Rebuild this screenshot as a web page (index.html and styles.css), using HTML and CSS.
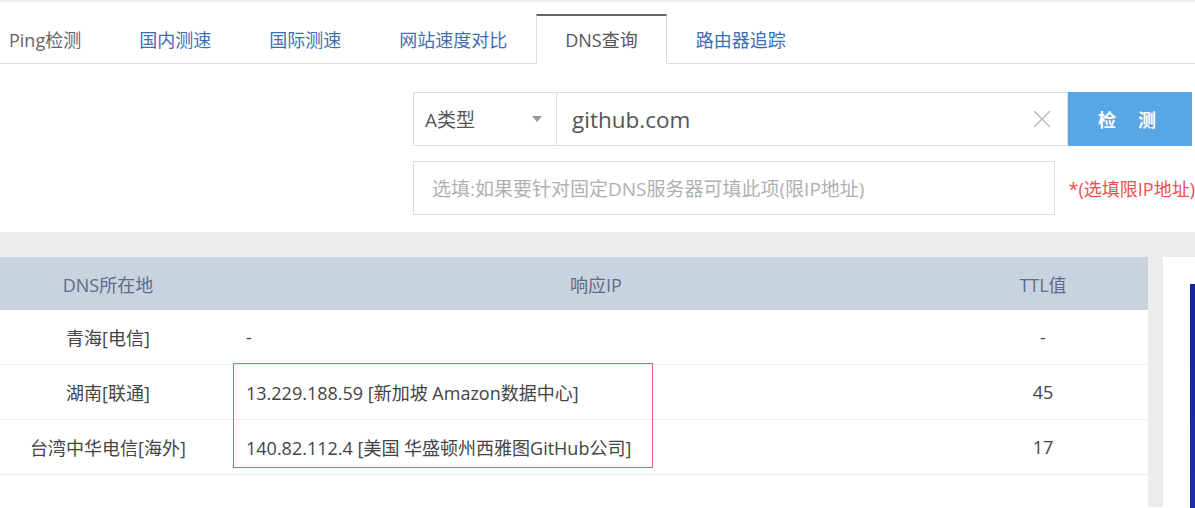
FILE: index.html
```html
<!DOCTYPE html>
<html lang="zh-CN">
<head>
<meta charset="utf-8">
<title>DNS查询</title>
<link rel="stylesheet" href="styles.css">
</head>
<body>
<div class="page">
  <nav class="tabs">
    <a class="tab tab-first">Ping检测</a>
    <a class="tab">国内测速</a>
    <a class="tab">国际测速</a>
    <a class="tab">网站速度对比</a>
    <a class="tab tab-active">DNS查询</a>
    <a class="tab">路由器追踪</a>
  </nav>
  <section class="form">
    <div class="form-row">
      <div class="select">
        <span>A类型</span>
        <span class="caret"></span>
      </div>
      <div class="domain">
        <span class="domain-text">github.com</span>
        <svg class="clear" width="18" height="18" viewBox="0 0 18 18"><path d="M1 1L17 17M17 1L1 17" stroke="#b5b5b5" stroke-width="1.3" fill="none"/></svg>
      </div>
      <button class="btn">检测</button>
    </div>
    <div class="form-row form-row-2">
      <div class="server">选填:如果要针对固定DNS服务器可填此项(限IP地址)</div>
      <span class="hint">*(选填限IP地址)</span>
    </div>
  </section>
  <section class="main">
    <div class="card">
      <div class="thead">
        <div class="c1">DNS所在地</div>
        <div class="c2 center">响应IP</div>
        <div class="c3">TTL值</div>
      </div>
      <div class="tbody">
        <div class="tr">
          <div class="c1">青海[电信]</div>
          <div class="c2">-</div>
          <div class="c3">-</div>
        </div>
        <div class="tr">
          <div class="c1">湖南[联通]</div>
          <div class="c2">13.229.188.59 [新加坡 Amazon数据中心]</div>
          <div class="c3">45</div>
        </div>
        <div class="tr">
          <div class="c1">台湾中华电信[海外]</div>
          <div class="c2">140.82.112.4 [美国 华盛顿州西雅图GitHub公司]</div>
          <div class="c3">17</div>
        </div>
        <div class="mark"></div>
      </div>
    </div>
    <aside class="side">
      <div class="side-bar"></div>
    </aside>
  </section>
</div>
</body>
</html>
```

FILE: styles.css
```css
* { box-sizing: border-box; }
html, body { margin: 0; padding: 0; }
body {
  width: 1195px;
  height: 508px;
  overflow: hidden;
  background: #fff;
  font-family: "Open Sans", "Noto Sans CJK SC", sans-serif;
  color: #444;
}
.page { width: 1195px; border-top: 2px solid #eeeeee; }

.tabs {
  display: flex;
  padding-top: 12px;
  border-bottom: 1px solid #dcdcdc;
  height: 62px;
}
.tab {
  display: block;
  padding: 0 28px;
  height: 50px;
  line-height: 48px;
  font-size: 18px;
  color: #3d6fb6;
  border: 1px solid transparent;
  border-top: 2px solid transparent;
  margin-bottom: -1px;
  white-space: nowrap;
}
.tab-first { padding-left: 8px; color: #666; }
.tab-active {
  color: #555;
  background: #fff;
  border-color: #dcdcdc;
  border-top-color: #666;
  border-bottom-color: #fff;
}

.form {
  padding: 28px 0 17px 413px;
}
.form-row { display: flex; align-items: center; }
.form-row-2 { margin-top: 15px; }
.select {
  width: 144px;
  height: 54px;
  border: 1px solid #dedede;
  display: flex;
  align-items: center;
  justify-content: space-between;
  padding: 0 14px 0 11px;
  font-size: 19px;
  color: #555;
}
.caret {
  width: 0; height: 0;
  border-left: 5px solid transparent;
  border-right: 5px solid transparent;
  border-top: 6px solid #999;
}
.domain {
  width: 511px;
  height: 54px;
  border: 1px solid #dedede;
  border-left: none;
  display: flex;
  align-items: center;
  justify-content: space-between;
  padding: 0 16px 0 15px;
}
.domain-text { font-size: 22.5px; color: #555; }
.btn {
  width: 124px;
  height: 54px;
  border: none;
  background: #58a6e3;
  color: #fff;
  font-family: inherit;
  font-size: 18px;
  font-weight: bold;
  letter-spacing: 22px;
  padding-left: 22px;
}
.server {
  width: 643px;
  height: 54px;
  border: 1px solid #dedede;
  display: flex;
  align-items: center;
  padding-left: 18px;
  font-size: 19px;
  color: #b0b0b0;
  white-space: nowrap;
}
.hint {
  margin-left: 14px;
  font-size: 18px;
  color: #ec5151;
  white-space: nowrap;
}

.main {
  display: flex;
  gap: 15px;
  background: #ececec;
  padding-top: 25px;
  height: 275px;
}
.card {
  width: 1148px;
  background: #fff;
}
.side {
  flex: 1;
  background: #fff;
  padding: 27px 0 0 27px;
}
.side-bar {
  width: 10px;
  height: 230px;
  background: linear-gradient(#14249a, #1c2fa8);
}
.thead, .tr {
  display: grid;
  grid-template-columns: 216px 760px 172px;
  align-items: center;
}
.thead {
  height: 53px;
  background: #c9d2df;
  color: #5d6d88;
  font-size: 18px;
}
.tr {
  height: 55px;
  border-bottom: 1px solid #ededed;
  font-size: 18px;
  color: #444;
}
.c1 { text-align: center; }
.c2 { padding-left: 30px; white-space: nowrap; }
.c2.center { padding-left: 0; text-align: center; }
.c3 { text-align: center; padding-right: 38px; }
.tbody { position: relative; }
.mark {
  position: absolute;
  left: 233px;
  top: 53px;
  width: 420px;
  height: 105px;
  border: 1.5px solid #d8646c;
}
```
